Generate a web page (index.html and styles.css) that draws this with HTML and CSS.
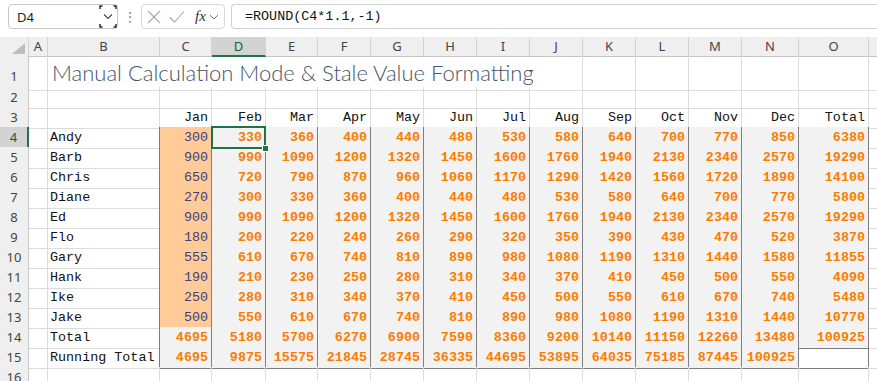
FILE: index.html
```html
<!DOCTYPE html>
<html>
<head>
<meta charset="utf-8">
<link rel="stylesheet" href="styles.css">
</head>
<body>
<div class="bar">
  <div class="name"><span>D4</span>
    <svg class="chev" width="18" height="23" viewBox="0 0 18 23"><path d="M3.5 1H1V4M3.5 22H1V19M14.5 1H17V4M14.5 22H17V19" fill="none" stroke="#222" stroke-width="1.4"/><path d="M5 9.5L9 13.5L13 9.5" fill="none" stroke="#444" stroke-width="1.1"/></svg>
  </div>
  <div class="dots">⋮</div>
  <div class="fxb">
    <svg width="14" height="14" viewBox="0 0 14 14"><path d="M1 1L13 13M13 1L1 13" stroke="#A8A8A8" stroke-width="1.1"/></svg>
    <svg class="ok" width="16" height="14" viewBox="0 0 16 14"><path d="M1 7.5L5.5 12L15 1.5" fill="none" stroke="#A8A8A8" stroke-width="1.1"/></svg>
    <span class="fx">fx</span>
    <svg width="10" height="8" viewBox="0 0 10 8"><path d="M1 2L5 6L9 2" fill="none" stroke="#777" stroke-width="1"/></svg>
  </div>
  <div class="formula">=ROUND(C4*1.1,-1)</div>
</div>

<div class="sheet">
  <div class="r hd"><span class="corner"><svg width="13" height="11" viewBox="0 0 13 11"><polygon points="13,0 13,11 0,11" fill="#BDBDBD"/></svg></span><span>A</span><span>B</span><span>C</span><span class="hs">D</span><span>E</span><span>F</span><span>G</span><span>H</span><span>I</span><span>J</span><span>K</span><span>L</span><span>M</span><span>N</span><span>O</span><span></span></div>

  <div class="r r1"><span class="h">1</span><span></span><span class="title">Manual Calculation Mode &amp; Stale Value Formatting</span><span></span><span></span><span></span><span></span><span></span><span></span></div>

  <div class="r"><span class="h">2</span><span></span><span></span><span></span><span></span><span></span><span></span><span></span><span></span><span></span><span></span><span></span><span></span><span></span><span></span><span></span><span></span></div>

  <div class="r"><span class="h">3</span><span></span><span></span><span class="tb">Jan</span><span class="tb">Feb</span><span class="tb">Mar</span><span class="tb">Apr</span><span class="tb">May</span><span class="tb">Jun</span><span class="tb">Jul</span><span class="tb">Aug</span><span class="tb">Sep</span><span class="tb">Oct</span><span class="tb">Nov</span><span class="tb">Dec</span><span class="tb">Total</span><span></span></div>

  <div class="r"><span class="h hs">4</span><span></span><span class="bx">Andy</span><span class="in">300</span><span class="ca sel">330</span><span class="ca">360</span><span class="ca">400</span><span class="ca">440</span><span class="ca">480</span><span class="ca">530</span><span class="ca">580</span><span class="ca">640</span><span class="ca">700</span><span class="ca">770</span><span class="ca">850</span><span class="ca">6380</span><span></span></div>

  <div class="r"><span class="h">5</span><span></span><span class="bx">Barb</span><span class="in">900</span><span class="ca">990</span><span class="ca">1090</span><span class="ca">1200</span><span class="ca">1320</span><span class="ca">1450</span><span class="ca">1600</span><span class="ca">1760</span><span class="ca">1940</span><span class="ca">2130</span><span class="ca">2340</span><span class="ca">2570</span><span class="ca">19290</span><span></span></div>

  <div class="r"><span class="h">6</span><span></span><span class="bx">Chris</span><span class="in">650</span><span class="ca">720</span><span class="ca">790</span><span class="ca">870</span><span class="ca">960</span><span class="ca">1060</span><span class="ca">1170</span><span class="ca">1290</span><span class="ca">1420</span><span class="ca">1560</span><span class="ca">1720</span><span class="ca">1890</span><span class="ca">14100</span><span></span></div>

  <div class="r"><span class="h">7</span><span></span><span class="bx">Diane</span><span class="in">270</span><span class="ca">300</span><span class="ca">330</span><span class="ca">360</span><span class="ca">400</span><span class="ca">440</span><span class="ca">480</span><span class="ca">530</span><span class="ca">580</span><span class="ca">640</span><span class="ca">700</span><span class="ca">770</span><span class="ca">5800</span><span></span></div>

  <div class="r"><span class="h">8</span><span></span><span class="bx">Ed</span><span class="in">900</span><span class="ca">990</span><span class="ca">1090</span><span class="ca">1200</span><span class="ca">1320</span><span class="ca">1450</span><span class="ca">1600</span><span class="ca">1760</span><span class="ca">1940</span><span class="ca">2130</span><span class="ca">2340</span><span class="ca">2570</span><span class="ca">19290</span><span></span></div>

  <div class="r"><span class="h">9</span><span></span><span class="bx">Flo</span><span class="in">180</span><span class="ca">200</span><span class="ca">220</span><span class="ca">240</span><span class="ca">260</span><span class="ca">290</span><span class="ca">320</span><span class="ca">350</span><span class="ca">390</span><span class="ca">430</span><span class="ca">470</span><span class="ca">520</span><span class="ca">3870</span><span></span></div>

  <div class="r"><span class="h">10</span><span></span><span class="bx">Gary</span><span class="in">555</span><span class="ca">610</span><span class="ca">670</span><span class="ca">740</span><span class="ca">810</span><span class="ca">890</span><span class="ca">980</span><span class="ca">1080</span><span class="ca">1190</span><span class="ca">1310</span><span class="ca">1440</span><span class="ca">1580</span><span class="ca">11855</span><span></span></div>

  <div class="r"><span class="h">11</span><span></span><span class="bx">Hank</span><span class="in">190</span><span class="ca">210</span><span class="ca">230</span><span class="ca">250</span><span class="ca">280</span><span class="ca">310</span><span class="ca">340</span><span class="ca">370</span><span class="ca">410</span><span class="ca">450</span><span class="ca">500</span><span class="ca">550</span><span class="ca">4090</span><span></span></div>

  <div class="r"><span class="h">12</span><span></span><span class="bx">Ike</span><span class="in">250</span><span class="ca">280</span><span class="ca">310</span><span class="ca">340</span><span class="ca">370</span><span class="ca">410</span><span class="ca">450</span><span class="ca">500</span><span class="ca">550</span><span class="ca">610</span><span class="ca">670</span><span class="ca">740</span><span class="ca">5480</span><span></span></div>

  <div class="r"><span class="h">13</span><span></span><span class="bx">Jake</span><span class="in">500</span><span class="ca">550</span><span class="ca">610</span><span class="ca">670</span><span class="ca">740</span><span class="ca">810</span><span class="ca">890</span><span class="ca">980</span><span class="ca">1080</span><span class="ca">1190</span><span class="ca">1310</span><span class="ca">1440</span><span class="ca">10770</span><span></span></div>

  <div class="r"><span class="h">14</span><span></span><span class="bx">Total</span><span class="ca">4695</span><span class="ca">5180</span><span class="ca">5700</span><span class="ca">6270</span><span class="ca">6900</span><span class="ca">7590</span><span class="ca">8360</span><span class="ca">9200</span><span class="ca">10140</span><span class="ca">11150</span><span class="ca">12260</span><span class="ca">13480</span><span class="ca">100925</span><span></span></div>

  <div class="r"><span class="h">15</span><span></span><span class="bx">Running Total</span><span class="ca">4695</span><span class="ca">9875</span><span class="ca">15575</span><span class="ca">21845</span><span class="ca">28745</span><span class="ca">36335</span><span class="ca">44695</span><span class="ca">53895</span><span class="ca">64035</span><span class="ca">75185</span><span class="ca">87445</span><span class="ca">100925</span><span class="oe"></span><span></span></div>

  <div class="r"><span class="h">16</span><span></span><span></span><span></span><span></span><span></span><span></span><span></span><span></span><span></span><span></span><span></span><span></span><span></span><span></span><span></span><span></span></div>
</div>
</body>
</html>
```

FILE: styles.css
```css
html, body {
  margin: 0;
  padding: 0;
  background: #ffffff;
  overflow: hidden;
}

body {
  width: 877px;
  height: 381px;
  font-family: "Liberation Mono", "DejaVu Sans Mono", monospace;
}

/* ---------- formula bar ---------- */
.bar {
  display: flex;
  align-items: flex-start;
  height: 37px;
  padding: 4px 0 0 8px;
  box-sizing: border-box;
}

.name {
  box-sizing: border-box;
  width: 110px;
  height: 25px;
  border: 1px solid #C8C8C8;
  border-radius: 4px;
  display: flex;
  align-items: center;
  padding-left: 8px;
  font: 13px "Noto Sans", sans-serif;
  color: #1b1b1b;
}

.name span {
  flex: 1;
}

.chev {
  display: block;
}

.dots {
  width: 23px;
  text-align: center;
  color: #8a8a8a;
  font: 14px "Noto Sans", sans-serif;
  line-height: 25px;
}

.fxb {
  box-sizing: border-box;
  width: 84px;
  height: 25px;
  border: 1px solid #D9D9D9;
  border-radius: 4px;
  display: flex;
  align-items: center;
  padding-left: 5px;
}

.fxb .ok {
  margin-left: 8px;
}

.fx {
  margin-left: 10px;
  font: italic 15px "Liberation Serif", serif;
  color: #333;
  margin-right: 3px;
}

.formula {
  box-sizing: border-box;
  margin-left: 6px;
  flex: 1;
  height: 25px;
  border: 1px solid #D0D0D0;
  border-right: none;
  border-radius: 4px 0 0 4px;
  padding-left: 13px;
  font-size: 13.4px;
  line-height: 23px;
  color: #111;
}

/* ---------- sheet grid ---------- */
.r {
  display: grid;
  grid-template-columns: 29px 19px 112px 52px 54px 52px 53px 53px 53px 53px 53px 53px 53px 53px 57px 70px 60px;
  height: 20px;
}

.r > * {
  box-sizing: border-box;
  border-right: 1px solid #DCDCDC;
  border-bottom: 1px solid #DCDCDC;
  padding: 2px 3px 0 2px;
  font-size: 13.4px;
  line-height: 17px;
  white-space: nowrap;
  text-align: right;
  color: #111;
}

/* column header row */
.hd {
  height: 19px;
}

.hd > * {
  background: #EFEFEF;
  border-right-color: #D2D2D2;
  border-bottom-color: #C6C6C6;
  text-align: center;
  padding: 0;
  font: 13px "Noto Sans", sans-serif;
  line-height: 18px;
  color: #444;
}

.hd > .corner {
  display: flex;
  align-items: flex-end;
  justify-content: flex-end;
  padding: 0 3px 2px 0;
}

.hd > .corner svg {
  display: block;
}

.hd > .hs {
  background: #D3D3D3;
  border-bottom: 2px solid #217346;
  color: #185c37;
}

/* row headers */
.r > .h {
  background: #EFEFEF;
  border-right-color: #C8C8C8;
  border-bottom-color: #D6D6D6;
  text-align: center;
  padding: 0;
  font: 13px "Noto Sans", sans-serif;
  line-height: 21px;
  color: #444;
}

.r > .h.hs {
  background: #D3D3D3;
  border-right: 2px solid #217346;
  color: #185c37;
}

/* title row */
.r1 {
  height: 31px;
}

.r1 > * {
  line-height: 31px;
}

.r1 > .h {
  padding-top: 10px;
  line-height: 21px;
}

.r > .title {
  grid-column: 3 / 12;
  text-align: left;
  padding: 0 0 0 4px;
  font: 300 22px "Lato", sans-serif;
  line-height: 34px;
  color: #44546A;
  overflow: visible;
}

/* labels */
.r > .bx {
  text-align: left;
  border-right-color: #7F7F7F;
}

.r > .tb {
  border-bottom-color: #7F7F7F;
}

/* input style */
.r > .in {
  background: #FFCC99;
  color: #3F3F76;
  border-right-color: #7F7F7F;
  border-bottom-color: #7F7F7F;
}

/* calculation style */
.r > .ca {
  background: #F2F2F2;
  color: #FA7D00;
  font-weight: bold;
  border-right-color: #7F7F7F;
  border-bottom-color: #7F7F7F;
}

.r > .oe {
  border-right-color: #7F7F7F;
  border-bottom-color: #7F7F7F;
}

/* active cell */
.r > .sel {
  position: relative;
  z-index: 2;
}

.r > .sel::before {
  content: "";
  position: absolute;
  left: -1px;
  top: -1px;
  right: -1px;
  bottom: -1px;
  border: 2px solid #217346;
}

.r > .sel::after {
  content: "";
  position: absolute;
  right: -4px;
  bottom: -4px;
  width: 5px;
  height: 5px;
  background: #217346;
  border: 1px solid #ffffff;
}
```
